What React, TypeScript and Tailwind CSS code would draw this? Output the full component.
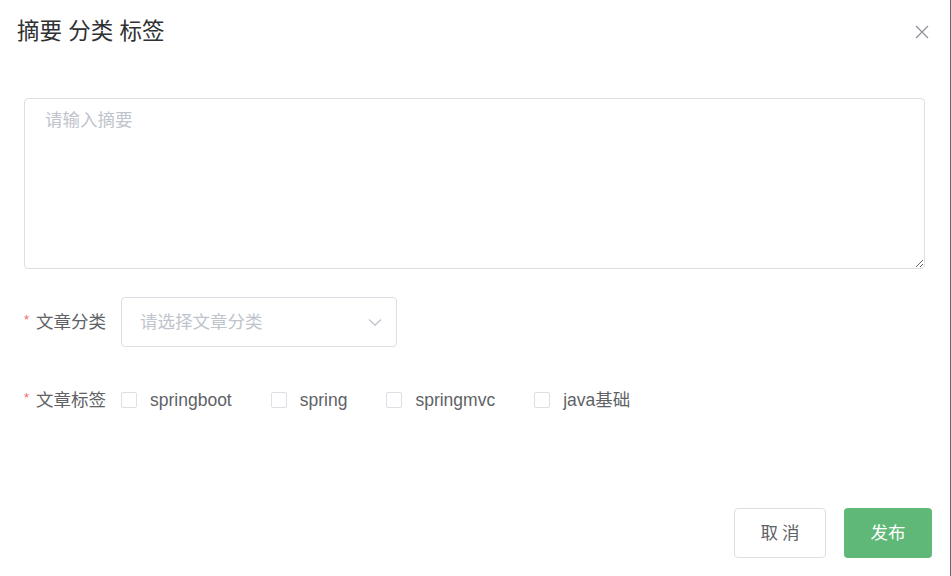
import React, { useState } from 'react';

const tags = ['springboot', 'spring', 'springmvc', 'java基础'];

const App: React.FC = () => {
  const [summary, setSummary] = useState('');
  const [checked, setChecked] = useState<string[]>([]);

  const toggle = (t: string) =>
    setChecked((prev) => (prev.includes(t) ? prev.filter((x) => x !== t) : [...prev, t]));

  return (
    <div
      className="w-[951px] h-[576px] bg-white border-r border-[#6b6b6b] overflow-hidden"
      style={{ fontFamily: '"Liberation Sans", "Noto Sans CJK SC", sans-serif' }}
    >
      <div className="flex items-center justify-between pl-[17px] pr-[20px] pt-[18px] h-[46px]">
        <span className="text-[22.5px] leading-[28px] text-[#303133]">摘要 分类 标签</span>
        <button className="w-[16px] h-[16px] flex items-center justify-center text-[#909399]">
          <svg width="14" height="14" viewBox="0 0 14 14" fill="none" stroke="currentColor" strokeWidth="1.3">
            <path d="M1 1l12 12M13 1L1 13" />
          </svg>
        </button>
      </div>

      <div className="pl-[24px] pr-[26px]">
        <textarea
          className="mt-[52px] block w-[901px] h-[171px] border border-[#dcdfe6] rounded-[4px] pl-[20px] pr-[20px] py-[10px] text-[17.5px] leading-[22px] text-[#606266] placeholder:text-[#c0c4cc] outline-none"
          placeholder="请输入摘要"
          value={summary}
          onChange={(e) => setSummary(e.target.value)}
        />

        <div className="mt-[28px] flex items-center h-[50px]">
          <div className="w-[97px] flex items-center text-[17.5px] text-[#606266]">
            <span className="text-[#f56c6c] text-[13px] w-[12px] -mt-[4px]">*</span>
            <span>文章分类</span>
          </div>
          <div className="w-[276px] h-[50px] border border-[#dcdfe6] rounded-[4px] flex items-center justify-between pl-[18px] pr-[14px]">
            <span className="text-[17.5px] text-[#c0c4cc]">请选择文章分类</span>
            <svg width="14" height="14" viewBox="0 0 14 14" fill="none" stroke="#c0c4cc" strokeWidth="1.3">
              <path d="M1 4.5l6 5.5 6-5.5" />
            </svg>
          </div>
        </div>

        <div className="mt-[41px] flex items-center h-[24px]">
          <div className="w-[97px] flex items-center text-[17.5px] text-[#606266]">
            <span className="text-[#f56c6c] text-[13px] w-[12px] -mt-[4px]">*</span>
            <span>文章标签</span>
          </div>
          <div className="flex items-center">
            {tags.map((t) => (
              <label key={t} className="flex items-center mr-[39px] cursor-pointer" onClick={() => toggle(t)}>
                <span
                  className={`w-[16px] h-[16px] border rounded-[2px] ${
                    checked.includes(t) ? 'bg-[#5fb878] border-[#5fb878]' : 'border-[#dcdfe6] bg-white'
                  }`}
                />
                <span className="ml-[13px] text-[17.5px] text-[#606266]">{t}</span>
              </label>
            ))}
          </div>
        </div>
      </div>

      <div className="mt-[96px] flex justify-end pr-[18px] gap-[18px]">
        <button className="w-[92px] h-[50px] border border-[#dcdfe6] rounded-[4px] bg-white text-[17.5px] text-[#606266] tracking-[4px] pl-[4px]">
          取消
        </button>
        <button className="w-[88px] h-[50px] rounded-[4px] bg-[#5fb878] text-[17.5px] text-white">发布</button>
      </div>
    </div>
  );
};

export default App;
